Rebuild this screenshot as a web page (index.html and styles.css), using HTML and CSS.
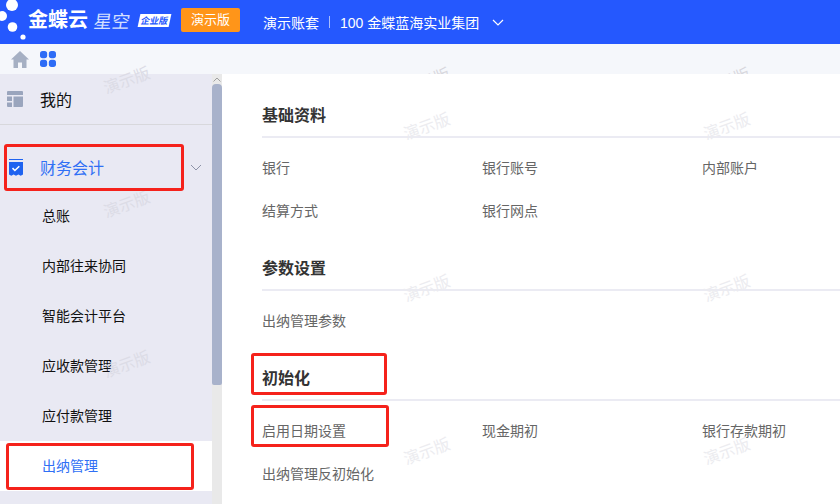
FILE: index.html
```html
<!DOCTYPE html>
<html lang="zh-CN">
<head>
    <meta charset="UTF-8">
    <meta name="viewport" content="width=device-width, initial-scale=1.0">
    <title>金蝶云星空</title>
    <link rel="stylesheet" href="styles.css">
</head>
<body>
    <!-- 顶部栏 -->
    <header class="topbar">
        <svg class="logo-dots" width="28" height="44" viewBox="0 0 28 44">
            <circle cx="12" cy="5" r="6" fill="#fff"/>
            <circle cx="2" cy="16" r="5" fill="#fff"/>
            <circle cx="12.500" cy="27" r="4.800" fill="#fff"/>
            <circle cx="23" cy="37" r="2.600" fill="#fff"/>
        </svg>
        <span class="logo-name">金蝶云</span>
        <span class="logo-product">星空</span>
        <span class="logo-badge"><span>企业版</span></span>
        <span class="demo-tag">演示版</span>
        <span class="account">演示账套</span>
        <span class="account-sep"></span>
        <span class="org">100 金蝶蓝海实业集团</span>
        <svg class="org-arrow" width="12" height="7" viewBox="0 0 12 7">
            <path d="M1 1l5 5 5-5" fill="none" stroke="#fff" stroke-width="1.200"/>
        </svg>
    </header>

    <!-- 快捷栏 -->
    <div class="toolbar">
        <svg class="home-icon" width="18" height="17" viewBox="0 0 18 17">
            <path d="M9 0L0 8.500h2.500V17h4.500v-5.500h4V17h4.500V8.500H18z" fill="#a6b0c3"/>
        </svg>
        <svg class="apps-icon" width="16" height="16" viewBox="0 0 17 17">
            <rect x="0" y="0" width="7.600" height="7.600" rx="2.800" fill="#2d6cf6"/>
            <rect x="9.400" y="0" width="7.600" height="7.600" rx="2.800" fill="#2d6cf6"/>
            <rect x="0" y="9.400" width="7.600" height="7.600" rx="2.800" fill="#2d6cf6"/>
            <rect x="9.400" y="9.400" width="7.600" height="7.600" rx="2.800" fill="#2d6cf6"/>
        </svg>
    </div>

    <div class="main">
        <!-- 左侧菜单 -->
        <nav class="sidebar">
            <div class="menu-mine">
                <svg width="16" height="16" viewBox="0 0 16 16">
                    <path d="M0 1a1 1 0 0 1 1-1h14a1 1 0 0 1 1 1v3H0zM0 5.500h5v4.500H0zM0 11.500h5V16H1a1 1 0 0 1-1-1zM6.500 5.500H16V15a1 1 0 0 1-1 1H6.500z" fill="#9aa5bd"/>
                </svg>
                <span>我的</span>
            </div>
            <div class="menu-group">
                <svg width="14" height="17" viewBox="0 0 14 17">
                    <path d="M0 0h14v1H0zM0 3h14v12.500l-2.300 1.200-2.300-1.200-2.400 1.200-2.400-1.200-2.300 1.200L0 15.500z" fill="#1f63f0"/>
                    <path d="M3.500 9.200l2.400 2.300 4.400-4.300" fill="none" stroke="#fff" stroke-width="1.600"/>
                </svg>
                <span>财务会计</span>
                <svg class="group-arrow" width="12" height="7" viewBox="0 0 12 7">
                    <path d="M1 1l5 5 5-5" fill="none" stroke="#8d93a8" stroke-width="1"/>
                </svg>
            </div>
            <a class="menu-item">总账</a>
            <a class="menu-item">内部往来协同</a>
            <a class="menu-item">智能会计平台</a>
            <a class="menu-item">应收款管理</a>
            <a class="menu-item">应付款管理</a>
            <a class="menu-item active">出纳管理</a>
        </nav>

        <div class="scrollbar">
            <svg class="scroll-up" width="8" height="5" viewBox="0 0 8 5">
                <path d="M.5 4.500L4 1l3.500 3.500" fill="none" stroke="#a0a0a0" stroke-width="1"/>
            </svg>
            <div class="scroll-thumb"></div>
        </div>

        <!-- 内容区 -->
        <section class="content">
            <div class="block block-base">
                <h3>基础资料</h3>
                <div class="links">
                    <a>银行</a><a>银行账号</a><a>内部账户</a>
                    <a>结算方式</a><a>银行网点</a>
                </div>
            </div>
            <div class="block block-param">
                <h3>参数设置</h3>
                <div class="links">
                    <a>出纳管理参数</a>
                </div>
            </div>
            <div class="block block-init">
                <h3>初始化</h3>
                <div class="links">
                    <a>启用日期设置</a><a>现金期初</a><a>银行存款期初</a>
                    <a>出纳管理反初始化</a>
                </div>
            </div>
        </section>
    </div>

    <!-- 水印 -->
    <span class="wm wm-s1">演示版</span>
    <span class="wm wm-s2">演示版</span>
    <span class="wm wm-s3">演示版</span>
    <span class="wm wm-a0">演示版</span>
    <span class="wm wm-b0">演示版</span>
    <span class="wm wm-a1">演示版</span>
    <span class="wm wm-b1">演示版</span>
    <span class="wm wm-a2">演示版</span>
    <span class="wm wm-b2">演示版</span>
    <span class="wm wm-a3">演示版</span>
    <span class="wm wm-b3">演示版</span>

    <!-- 红框标注 -->
    <div class="mark mark-group"></div>
    <div class="mark mark-active"></div>
    <div class="mark mark-title"></div>
    <div class="mark mark-link"></div>
</body>
</html>
```

FILE: styles.css
```css
* {
    box-sizing: border-box;
}
html, body {
    margin: 0;
    height: 504px;
    overflow: hidden;
}
body {
    position: relative;
    font-family: "Liberation Sans", "Noto Sans CJK SC", sans-serif;
    font-size: 14px;
    color: #222;
    background-color: #fff;
}

/* 顶部栏 */
.topbar {
    display: flex;
    align-items: center;
    height: 44px;
    background-color: #2558fe;
    color: #fff;
}
.logo-dots {
    flex: none;
}
.logo-name {
    font-size: 20px;
    font-weight: bold;
    width: 66px;
    line-height: 44px;
    margin-top: -4px;
}
.logo-product {
    font-size: 18px;
    color: #d5e0ff;
    width: 45px;
    margin-top: -4px;
    transform: skewX(-8deg);
}
.logo-badge {
    display: flex;
    align-items: center;
    justify-content: center;
    width: 31px;
    height: 13px;
    margin-top: -4px;
    background-color: #fff;
    transform: skewX(-12deg);
}
.logo-badge span {
    font-size: 9px;
    font-weight: bold;
    color: #2558fe;
    white-space: nowrap;
}
.demo-tag {
    width: 59px;
    height: 24px;
    margin-left: 11px;
    margin-top: -4px;
    line-height: 24px;
    text-align: center;
    font-size: 13px;
    background-color: #ff9519;
    border-radius: 2px;
}
.account {
    margin-left: 23px;
}
.account-sep {
    width: 1px;
    height: 12px;
    margin: 0 10px;
    background-color: #a9bdfd;
}
.org-arrow {
    margin-left: 13px;
}

/* 快捷栏 */
.toolbar {
    display: flex;
    align-items: center;
    gap: 11px;
    height: 30px;
    padding-left: 11px;
    background-color: #f5f7fb;
}

.main {
    display: flex;
    height: 430px;
}

/* 左侧菜单 */
.sidebar {
    width: 212px;
    flex: none;
    background-color: #e9e9f3;
}
.menu-mine {
    display: flex;
    align-items: center;
    gap: 17px;
    height: 51px;
    padding-left: 7px;
    font-size: 16px;
    color: #111;
    border-bottom: 1px solid #d8d8dc;
}
.menu-group {
    display: flex;
    align-items: center;
    gap: 17px;
    height: 48px;
    margin-top: 18px;
    padding-left: 9px;
    font-size: 16px;
    color: #2f6ff5;
}
.group-arrow {
    margin-left: 69px;
}
.menu-item {
    display: block;
    height: 50px;
    line-height: 50px;
    padding-left: 42px;
    font-size: 14px;
    color: #111;
}
.menu-item.active {
    background-color: #fff;
    color: #2f6ff5;
}

/* 滚动条 */
.scrollbar {
    width: 10px;
    flex: none;
    padding-top: 10px;
    position: relative;
    background-color: #e9e9e9;
}
.scroll-up {
    position: absolute;
    top: 3px;
    left: 1px;
}
.scroll-thumb {
    height: 301px;
    background-color: #a8b2cb;
    border-radius: 4px 4px 2px 2px;
}

/* 内容区 */
.content {
    flex: 1;
    padding-left: 40px;
    background-color: #fff;
    overflow: hidden;
    position: relative;
    z-index: 1;
}
.block h3 {
    margin: 0;
    height: 35px;
    line-height: 26px;
    font-size: 16px;
    font-weight: bold;
    color: #333;
    border-bottom: 2px solid #ebebf3;
}
.block-base {
    padding-top: 29px;
}
.block-param {
    padding-top: 23px;
}
.block-init {
    padding-top: 23px;
}
.links {
    display: grid;
    grid-template-columns: repeat(3, 220px);
    grid-auto-rows: 43px;
    padding-top: 9px;
}
.links a {
    line-height: 43px;
    font-size: 14px;
    color: #666;
    white-space: nowrap;
}

/* 水印 */
.wm {
    position: absolute;
    width: 48px;
    text-align: center;
    font-size: 16px;
    line-height: 20px;
    color: #d8d8de;
    transform: rotate(-20deg);
    white-space: nowrap;
    z-index: 2;
    pointer-events: none;
}
.wm-s1 { left: 103px; top: 71px; color: #dcdce6; }
.wm-s2 { left: 103px; top: 195px; color: #dcdce6; }
.wm-s3 { left: 103px; top: 355px; color: #dcdce6; }
.wm-a0, .wm-b0 { z-index: 0; }
.wm-a0 { left: 403px; top: 72px; }
.wm-b0 { left: 703px; top: 72px; }
.wm-a1 { left: 403px; top: 117px; color: #ececf0; }
.wm-b1 { left: 703px; top: 117px; color: #ececf0; }
.wm-a2 { left: 403px; top: 279px; color: #ececf0; }
.wm-b2 { left: 703px; top: 279px; color: #ececf0; }
.wm-a3 { left: 403px; top: 442px; color: #ececf0; }
.wm-b3 { left: 703px; top: 442px; color: #ececf0; }

/* 红框标注 */
.mark {
    position: absolute;
    border: 3px solid #f5221b;
    border-radius: 3px;
    z-index: 3;
}
.mark-group { left: 4px; top: 144px; width: 180px; height: 47px; }
.mark-active { left: 6px; top: 443px; width: 188px; height: 47px; }
.mark-title { left: 251px; top: 353px; width: 136px; height: 42px; }
.mark-link { left: 251px; top: 405px; width: 138px; height: 42px; }
```
